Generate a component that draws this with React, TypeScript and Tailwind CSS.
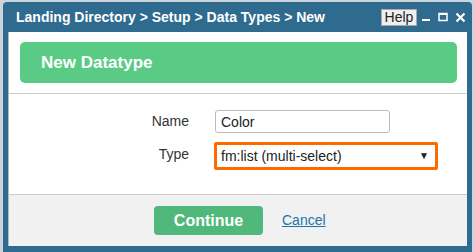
import React from 'react';

function WindowButtons() {
  return (
    <div className="ml-[5px] flex items-center gap-[7px] text-white">
      <svg width="9" height="10" viewBox="0 0 9 10" className="mt-[2px]">
        <rect x="0" y="6" width="8" height="2" fill="currentColor" />
      </svg>
      <svg width="10" height="10" viewBox="0 0 10 10">
        <rect x="1" y="1.5" width="8" height="7" fill="none" stroke="currentColor" strokeWidth="1.5" />
        <rect x="1" y="1" width="8" height="2" fill="currentColor" />
      </svg>
      <svg width="11" height="11" viewBox="0 0 11 11">
        <path d="M1.5 1.5 L9.5 9.5 M9.5 1.5 L1.5 9.5" stroke="currentColor" strokeWidth="2.2" />
      </svg>
    </div>
  );
}

export default function App() {
  return (
    <div className="h-[252px] w-[474px] overflow-hidden bg-[#ccd4db] font-['Liberation_Sans',Arial,sans-serif]">
      <div className="ml-[3px] mt-[2px] flex h-[250px] w-[469px] flex-col rounded-t-[4px] bg-[#2e6b8f] px-[5px] pb-[6px]">
        <div className="flex h-[30px] shrink-0 items-center pl-[8px] pr-[1px]">
          <div className="flex-1 text-[14px] font-bold text-white">
            Landing Directory &gt; Setup &gt; Data Types &gt; New
          </div>
          <button className="flex h-[17px] w-[36px] items-center justify-center border border-[#a8a8a8] bg-[#efefef] text-[14px] leading-none text-[#222]">
            Help
          </button>
          <WindowButtons />
        </div>

        <div className="flex flex-1 flex-col border-l border-[#a9bccb] bg-white">
          <div className="border-b border-[#cccccc] pb-[10px] pl-[11px] pr-[10px] pt-[10px]">
            <div className="flex h-[41px] items-center rounded-[5px] bg-[#59cb85] pl-[21px] text-[17px] font-bold text-white">
              New Datatype
            </div>
          </div>

          <div className="flex flex-col gap-[9px] border-b border-[#cccccc] pb-[24px] pt-[16px] text-[14px] text-[#333]">
            <div className="flex items-center">
              <div className="w-[180px] text-right">Name</div>
              <input
                defaultValue="Color"
                className="ml-[26px] h-[23px] w-[175px] rounded-[3px] border border-[#bbbbbb] px-[5px] text-[14px] text-[#222] outline-none"
              />
            </div>
            <div className="flex items-center">
              <div className="-mt-[3px] w-[180px] text-right">Type</div>
              <div className="ml-[25px] flex h-[28px] w-[224px] items-center justify-between rounded-[2px] border-[3px] border-[#ff6a00] pl-[4px] pr-[6px] text-[14px] text-[#222]">
                <span>fm:list (multi-select)</span>
                <span className="text-[10px] leading-none">▼</span>
              </div>
            </div>
          </div>

          <div className="flex flex-1 items-center bg-[#f1f1f1] pl-[145px]">
            <button className="h-[29px] w-[109px] rounded-[4px] bg-[#4fb87a] text-[16px] font-bold text-white">
              Continue
            </button>
            <a href="#" className="ml-[19px] text-[14px] text-[#1c74aa] underline">
              Cancel
            </a>
          </div>
        </div>
      </div>
    </div>
  );
}
